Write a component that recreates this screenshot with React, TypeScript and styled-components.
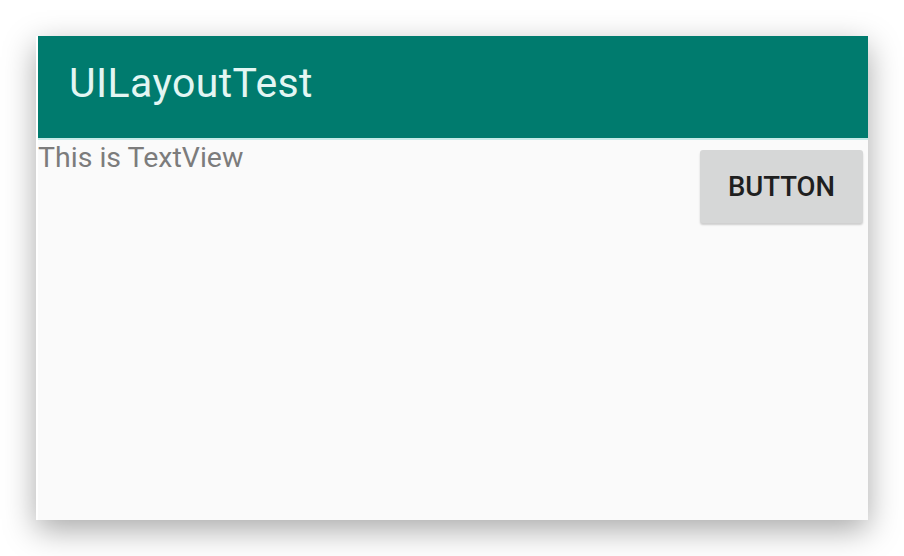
import React from "react";
import styled, { createGlobalStyle } from "styled-components";

const Global = createGlobalStyle`
  html, body {
    margin: 0;
    padding: 0;
    background: #ffffff;
  }
  body {
    font-family: Roboto, "Liberation Sans", Arial, sans-serif;
  }
`;

const Page = styled.div`
  width: 904px;
  height: 556px;
  padding: 36px;
  box-sizing: border-box;
  overflow: hidden;
`;

const Phone = styled.div`
  width: 832px;
  height: 484px;
  display: flex;
  flex-direction: column;
  background: #fafafa;
  border-left: 2px solid #ffffff;
  box-sizing: border-box;
  box-shadow: 0 10px 30px rgba(0, 0, 0, 0.34);
`;

const AppBar = styled.header`
  height: 104px;
  box-sizing: border-box;
  background: #007b6e;
  border-bottom: 2px solid #c6ebe8;
  padding: 23px 0 0 31px;
`;

const Title = styled.h1`
  margin: 0;
  font-family: Roboto, "Liberation Sans", sans-serif;
  font-weight: 400;
  font-size: 41px;
  letter-spacing: 0.4px;
  line-height: 48px;
  color: #e3f6f3;
`;

const Content = styled.main`
  flex: 1;
  display: flex;
  justify-content: space-between;
  align-items: flex-start;
`;

const TextView = styled.span`
  margin-top: 1px;
  font-family: Roboto, "Liberation Sans", sans-serif;
  font-size: 28.5px;
  line-height: 33px;
  color: #7c7c7c;
`;

const Button = styled.button`
  margin: 10px 5px 0 0;
  width: 163px;
  height: 73px;
  border: none;
  border-radius: 3px;
  background: #d6d7d7;
  box-shadow: 0 2px 2px rgba(0, 0, 0, 0.18);
  font-family: Roboto, "Liberation Sans", sans-serif;
  font-weight: 500;
  font-size: 27.5px;
  color: #1f1f1f;
  padding: 0;
`;

export default function App() {
  return (
    <>
      <Global />
      <Page>
        <Phone>
          <AppBar>
            <Title>UILayoutTest</Title>
          </AppBar>
          <Content>
            <TextView>This is TextView</TextView>
            <Button>BUTTON</Button>
          </Content>
        </Phone>
      </Page>
    </>
  );
}
